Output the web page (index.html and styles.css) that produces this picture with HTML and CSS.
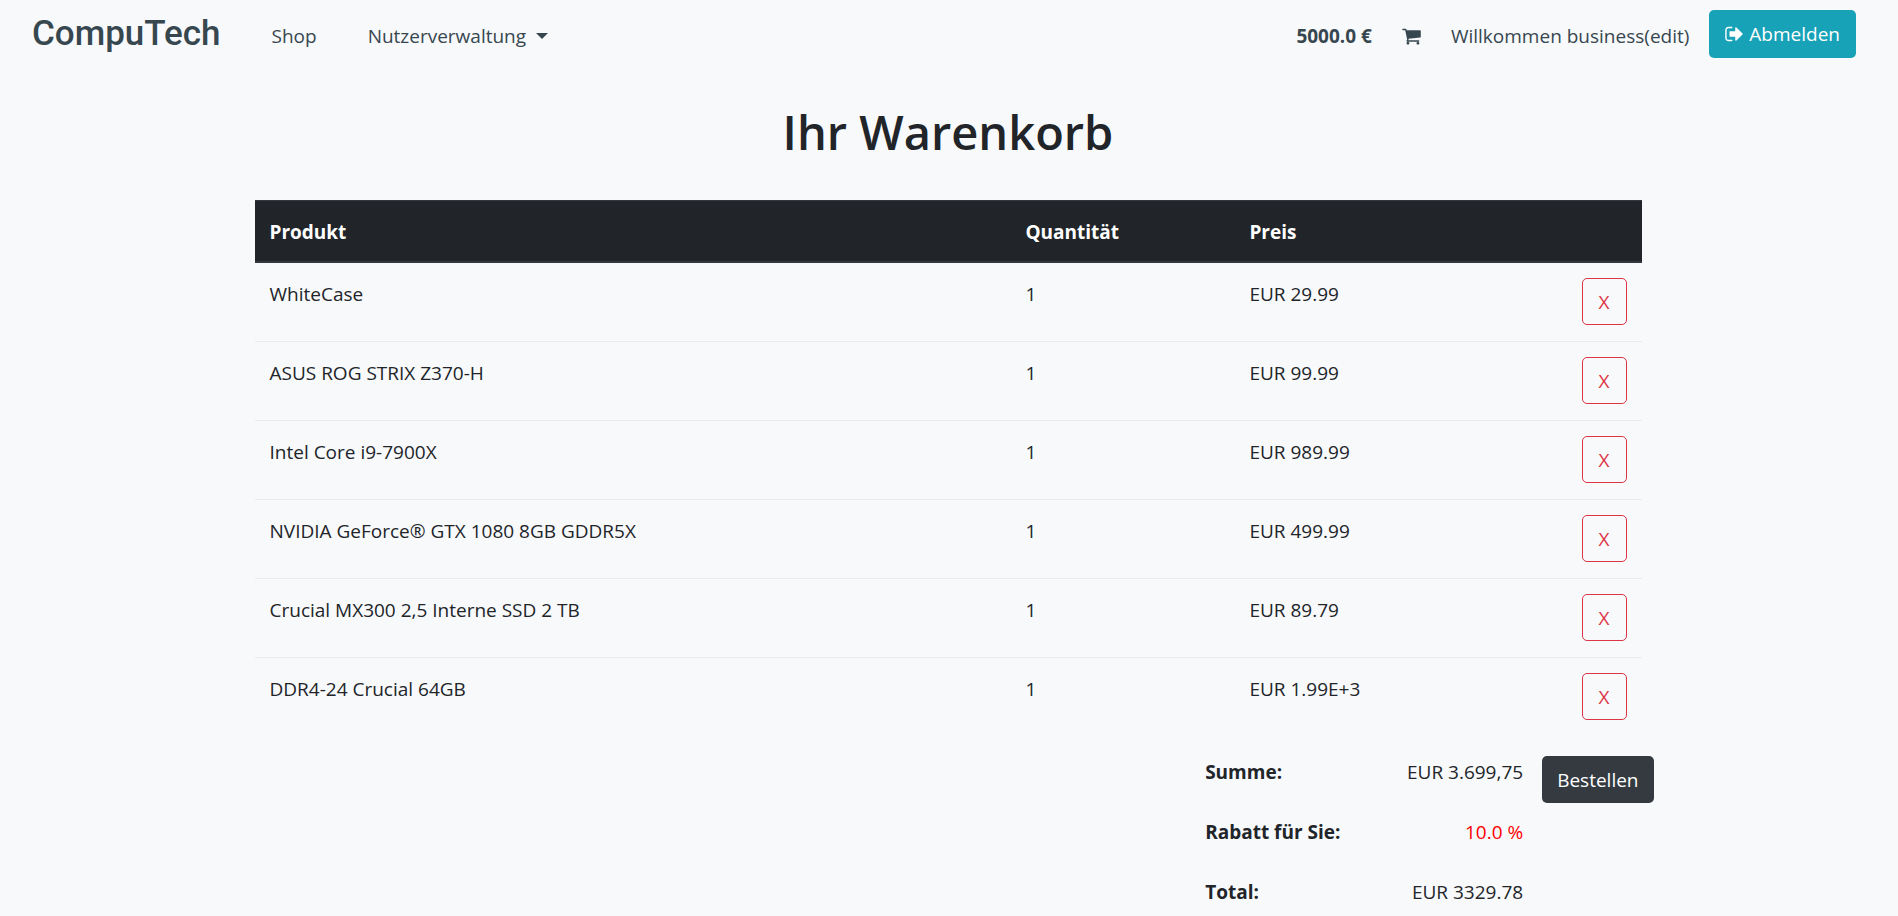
FILE: index.html
```html
<!DOCTYPE html>
<html lang="de">
<head>
<meta charset="utf-8">
<meta name="viewport" content="width=device-width, initial-scale=1">
<title>CompuTech – Warenkorb</title>
<link rel="stylesheet" href="styles.css">
</head>
<body>
<nav class="navbar">
  <a class="brand" href="#">CompuTech</a>
  <div class="nav-links">
    <a href="#">Shop</a>
    <a class="dropdown" href="#">Nutzerverwaltung</a>
  </div>
  <div class="account">
    <strong>5000.0 €</strong>
    <a class="cart-link" href="#" aria-label="Warenkorb"><svg class="icon" viewBox="0 0 1664 1792"><path d="M640 1536q0 52-38 90t-90 38-90-38-38-90 38-90 90-38 90 38 38 90zm896 0q0 52-38 90t-90 38-90-38-38-90 38-90 90-38 90 38 38 90zm128-1088v512q0 24-16.500 42.500t-40.500 21.500l-1044 122q13 60 13 70 0 16-24 64h920q26 0 45 19t19 45-19 45-45 19h-1024q-26 0-45-19t-19-45q0-11 8-31.500t16-36 21.500-40 15.500-29.500l-177-823h-204q-26 0-45-19t-19-45 19-45 45-19h256q16 0 28.500 6.500t19.500 15.500 13 24.500 8 26 5.500 29.500 4.500 26h1201q26 0 45 19t19 45z"/></svg></a>
    <a href="#">Willkommen business(edit)</a>
  </div>
  <button class="btn btn-info" type="button"><svg class="icon" viewBox="0 0 1664 1792" aria-hidden="true"><path d="M640 1440q0 4 1 20t.5 26.500-3 23.500-10 19.500-20.500 6.500h-320q-119 0-203.500-84.500t-84.500-203.500v-704q0-119 84.500-203.500t203.500-84.500h320q13 0 22.500 9.500t9.500 22.500q0 4 1 20t.5 26.500-3 23.500-10 19.500-20.500 6.500h-320q-66 0-113 47t-47 113v704q0 66 47 113t113 47h312l11.500 1 11.500 3 8 5.500 7 9 2 13.500zm928-544q0 26-19 45l-544 544q-19 19-45 19t-45-19-19-45v-288h-448q-26 0-45-19t-19-45v-384q0-26 19-45t45-19h448v-288q0-26 19-45t45-19 45 19l544 544q19 19 19 45z"/></svg>Abmelden</button>
</nav>
<main class="container">
  <h1>Ihr Warenkorb</h1>
  <table class="cart">
    <colgroup><col class="col-product"><col class="col-amount"><col class="col-price"><col></colgroup>
    <thead>
      <tr><th scope="col">Produkt</th><th scope="col">Quantität</th><th scope="col">Preis</th><th></th></tr>
    </thead>
    <tbody>
      <tr><td>WhiteCase</td><td>1</td><td>EUR 29.99</td><td class="action"><button class="btn btn-remove" type="button">X</button></td></tr>
      <tr><td>ASUS ROG STRIX Z370-H</td><td>1</td><td>EUR 99.99</td><td class="action"><button class="btn btn-remove" type="button">X</button></td></tr>
      <tr><td>Intel Core i9-7900X</td><td>1</td><td>EUR 989.99</td><td class="action"><button class="btn btn-remove" type="button">X</button></td></tr>
      <tr><td>NVIDIA GeForce® GTX 1080 8GB GDDR5X</td><td>1</td><td>EUR 499.99</td><td class="action"><button class="btn btn-remove" type="button">X</button></td></tr>
      <tr><td>Crucial MX300 2,5 Interne SSD 2 TB</td><td>1</td><td>EUR 89.79</td><td class="action"><button class="btn btn-remove" type="button">X</button></td></tr>
      <tr><td>DDR4-24 Crucial 64GB</td><td>1</td><td>EUR 1.99E+3</td><td class="action"><button class="btn btn-remove" type="button">X</button></td></tr>
    </tbody>
  </table>
  <div class="checkout">
    <table class="totals">
      <tbody>
        <tr><th scope="row">Summe:</th><td>EUR 3.699,75</td></tr>
        <tr><th scope="row">Rabatt für Sie:</th><td class="discount">10.0 %</td></tr>
        <tr><th scope="row">Total:</th><td>EUR 3329.78</td></tr>
      </tbody>
    </table>
    <button class="btn btn-dark" type="button">Bestellen</button>
  </div>
</main>
</body>
</html>
```

FILE: styles.css
```css
*, *::before, *::after { box-sizing: border-box; }

body {
  margin: 0;
  background: #f8f9fb;
  color: #212529;
  font-family: "Open Sans", "Noto Sans", sans-serif;
  font-size: 19px;
  line-height: 30px;
}

a { color: inherit; text-decoration: none; }

.icon {
  display: block;
  width: 19px;
  height: 20px;
  fill: currentColor;
}

.btn {
  height: 47px;
  padding: 0 14px;
  border: 1px solid transparent;
  border-radius: 5px;
  font: inherit;
  cursor: pointer;
}

.navbar {
  display: flex;
  align-items: center;
  padding: 10px 42px 10px 32px;
  color: #37474f;
}

.brand {
  margin-right: 51px;
  font-family: Roboto, sans-serif;
  font-size: 35px;
  font-weight: 500;
  line-height: 48px;
}

.nav-links { display: flex; gap: 51px; padding-top: 3px; }

.dropdown { display: flex; align-items: center; gap: 10px; }

.dropdown::after {
  content: "";
  border-top: 6px solid;
  border-right: 6px solid transparent;
  border-left: 6px solid transparent;
}

.account {
  display: flex;
  align-items: center;
  gap: 30px;
  margin-right: 20px;
  margin-left: auto;
  padding-top: 3px;
}

.btn-info {
  display: flex;
  align-items: center;
  gap: 5px;
  height: 48px;
  padding: 0 15px;
  background: #17a2b8;
  color: #fff;
}

.container {
  max-width: 1425px;
  margin: 0 auto;
  padding: 0 20px 0 18px;
}

h1 {
  margin: 34px 0 38px;
  font-size: 47px;
  font-weight: 600;
  line-height: 60px;
  text-align: center;
}

.cart {
  width: 100%;
  border-collapse: separate;
  border-spacing: 0;
  table-layout: fixed;
}

.col-product { width: 54.5%; }
.col-amount { width: 16.15%; }
.col-price { width: 19.2%; }

.cart th {
  padding: 16px 15px 14px;
  border-top: 1px solid #32383e;
  border-bottom: 2px solid #32383e;
  background: #212529;
  color: #fff;
  text-align: left;
}

.cart td {
  height: 79px;
  padding: 16px 15px 15px;
  border-top: 1px solid #e9ebee;
  vertical-align: top;
}

.cart tbody tr:first-child td { height: 78px; border-top: 0; }

.cart .action { padding-top: 15px; text-align: right; }

.btn-remove {
  display: inline-block;
  width: 45px;
  border-color: #dc3545;
  background: transparent;
  color: #dc3545;
  vertical-align: top;
}

.checkout {
  display: flex;
  justify-content: flex-end;
  align-items: flex-start;
  gap: 4px;
  margin: 6px -12px 0 0;
}

.totals {
  width: 348px;
  border-collapse: collapse;
}

.totals th, .totals td { padding: 15px; }
.totals th { text-align: left; }
.totals td { text-align: right; }
.totals tr:last-child > * { padding-bottom: 0; }
.totals .discount { color: #f00; }

.btn-dark {
  margin-top: 14px;
  background: #343a40;
  color: #fff;
}
```
